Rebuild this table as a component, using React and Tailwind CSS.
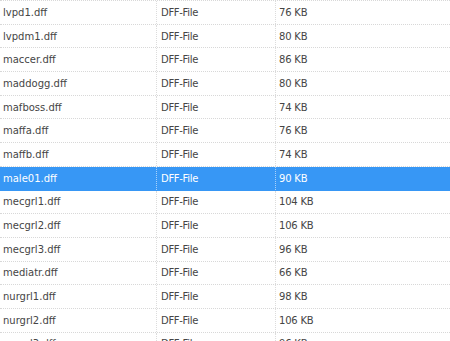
import React from "react";

const rows = [
  ["lvpd1.dff", "76 KB"],
  ["lvpdm1.dff", "80 KB"],
  ["maccer.dff", "86 KB"],
  ["maddogg.dff", "80 KB"],
  ["mafboss.dff", "74 KB"],
  ["maffa.dff", "76 KB"],
  ["maffb.dff", "74 KB"],
  ["male01.dff", "90 KB", true],
  ["mecgrl1.dff", "104 KB"],
  ["mecgrl2.dff", "106 KB"],
  ["mecgrl3.dff", "96 KB"],
  ["mediatr.dff", "66 KB"],
  ["nurgrl1.dff", "98 KB"],
  ["nurgrl2.dff", "106 KB"],
  ["nurgrl3.dff", "96 KB"],
];

export default function App() {
  return (
    <div
      className="w-[450px] h-[341px] overflow-hidden bg-white text-[10px] text-[#454545]"
      style={{ fontFamily: '"DejaVu Sans", Verdana, sans-serif' }}
    >
      <div className="border-t border-dotted border-[#d8d8d8]" />
      {rows.map(([name, size, sel], i) => (
        <div
          key={i}
          className={
            "grid grid-cols-[156px_119px_1fr] h-[23.7px] items-center border-b border-dotted " +
            (sel ? "bg-[#3797f5] text-white border-[#3797f5]" : "border-[#d8d8d8]")
          }
        >
          <div className="pl-[3px] h-full flex items-center">{name}</div>
          <div
            className={
              "pl-[4px] h-full flex items-center border-l border-dotted tracking-[-0.3px] " +
              (sel ? "border-[#a9d2fa]" : "border-[#dcdcdc]")
            }
          >
            DFF-File
          </div>
          <div
            className={
              "pl-[3px] h-full flex items-center border-l border-dotted tracking-[-0.2px] " +
              (sel ? "border-[#a9d2fa]" : "border-[#dcdcdc]")
            }
          >
            {size}
          </div>
        </div>
      ))}
    </div>
  );
}
